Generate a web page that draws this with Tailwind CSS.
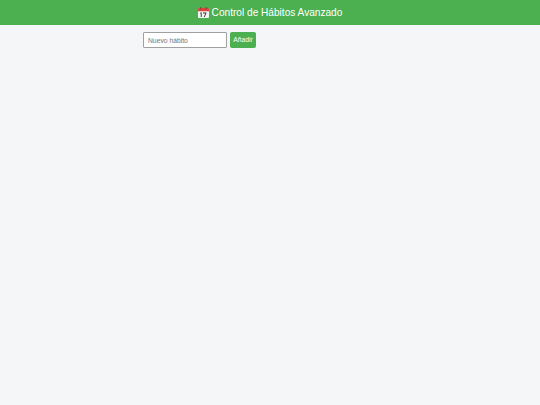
<!DOCTYPE html>
<html lang="es">
<head>
    <meta charset="UTF-8">
    <meta name="viewport" content="width=device-width, initial-scale=1.0">
    <title>Control de Hábitos Avanzado</title>
    <script src="https://cdn.jsdelivr.net/npm/@tailwindcss/browser@4"></script>
</head>
<body class="min-h-screen bg-[#f4f6f8] font-['Liberation_Sans',Arial,sans-serif]">
    <!-- Header -->
    <header class="h-[25px] bg-[#4caf50] text-white flex items-center justify-center gap-[3px]">
        <svg class="w-[11px] h-[11px]" viewBox="0 0 12 12">
            <rect x="0" y="1" width="12" height="11" rx="1" fill="#f4f4f4"/>
            <path d="M0 2a1 1 0 0 1 1-1h10a1 1 0 0 1 1 1v2.5H0z" fill="#d9453d"/>
            <rect x="2.5" y="0" width="1" height="2.5" fill="#7a3a36"/>
            <rect x="8.5" y="0" width="1" height="2.5" fill="#7a3a36"/>
            <path d="M2.6 6h1.4v5H3V7.2l-.6.3zM5.4 6h3.8v.9l-1.9 4.1H6.2l1.9-4H5.4z" fill="#333"/>
        </svg>
        <h1 class="mt-[1px] text-[10.125px] leading-none font-normal">Control de Hábitos Avanzado</h1>
    </header>

    <!-- New habit form -->
    <main class="w-[254px] mx-auto pt-[7px]">
        <form class="flex gap-[3px]">
            <input type="text" placeholder="Nuevo hábito" class="w-[84px] h-[16px] px-[4px] text-[6.75px] bg-white border border-[#a0a0a0] rounded-[1px] placeholder:text-[#757575] outline-none">
            <button type="button" class="w-[26px] h-[16px] bg-[#4caf50] text-white text-[6.75px] rounded-[2px]">Añadir</button>
        </form>
    </main>
</body>
</html>
